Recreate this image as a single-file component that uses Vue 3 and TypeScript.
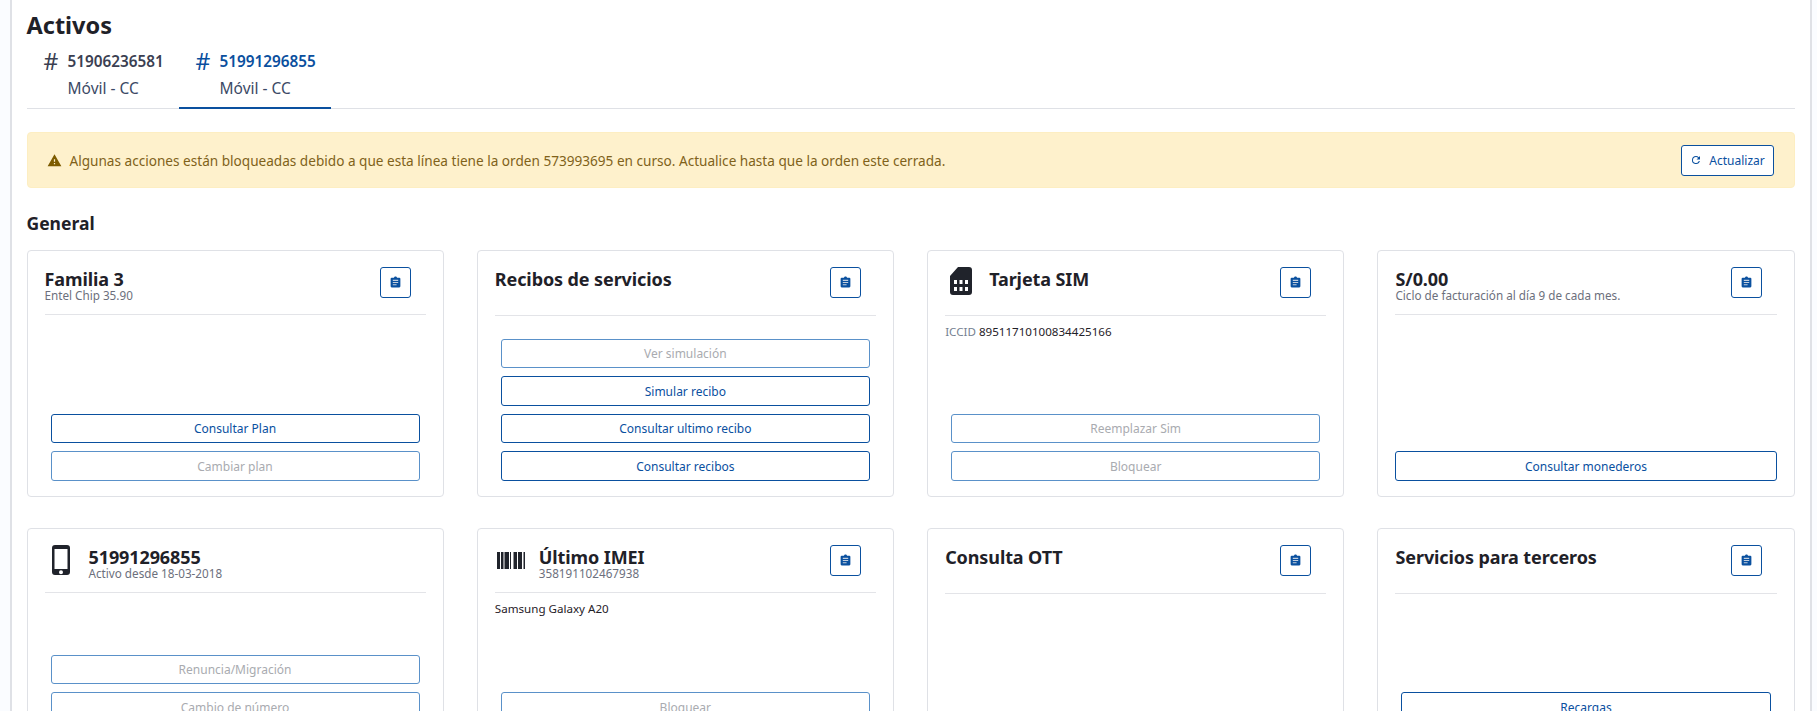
<script setup lang="ts">
type Action = { label: string; enabled?: boolean };
type Card = {
  title: string;
  sub?: string;
  icon?: 'sim' | 'phone' | 'barcode';
  noCopy?: boolean;
  iccid?: string;
  note?: string;
  actions: Action[];
  wide?: boolean;
  inset?: boolean;
  clipped?: boolean;
  low?: boolean;
};

const cards: Card[] = [
  { title: 'Familia 3', sub: 'Entel Chip 35.90', actions: [{ label: 'Consultar Plan', enabled: true }, { label: 'Cambiar plan' }] },
  {
    title: 'Recibos de servicios',
    low: true,
    actions: [
      { label: 'Ver simulación' },
      { label: 'Simular recibo', enabled: true },
      { label: 'Consultar ultimo recibo', enabled: true },
      { label: 'Consultar recibos', enabled: true },
    ],
  },
  { title: 'Tarjeta SIM', icon: 'sim', low: true, iccid: '89511710100834425166', actions: [{ label: 'Reemplazar Sim' }, { label: 'Bloquear' }] },
  { title: 'S/0.00', sub: 'Ciclo de facturación al día 9 de cada mes.', wide: true, actions: [{ label: 'Consultar monederos', enabled: true }] },
  { title: '51991296855', sub: 'Activo desde 18-03-2018', icon: 'phone', noCopy: true, clipped: true, actions: [{ label: 'Renuncia/Migración' }, { label: 'Cambio de número' }] },
  { title: 'Último IMEI', sub: '358191102467938', icon: 'barcode', note: 'Samsung Galaxy A20', clipped: true, actions: [{ label: 'Bloquear' }] },
  { title: 'Consulta OTT', low: true, clipped: true, actions: [] },
  { title: 'Servicios para terceros', low: true, inset: true, clipped: true, actions: [{ label: 'Recargas', enabled: true }] },
];

const tabs = [
  { number: '51906236581', kind: 'Móvil - CC', active: false },
  { number: '51991296855', kind: 'Móvil - CC', active: true },
];
</script>

<template>
  <div class="page">
    <h1 class="title">Activos</h1>
    <nav class="tabs">
      <div v-for="tab in tabs" :key="tab.number" class="tab" :class="{ active: tab.active }">
        <div class="tab-top"><span class="hash">#</span><b>{{ tab.number }}</b></div>
        <div class="tab-kind">{{ tab.kind }}</div>
      </div>
    </nav>

    <div class="alert">
      <svg class="warn" viewBox="0 0 24 24"><path d="M1 21h22L12 2 1 21zm12-3h-2v-2h2v2zm0-4h-2v-4h2v4z" /></svg>
      <span class="alert-text">Algunas acciones están bloqueadas debido a que esta línea tiene la orden 573993695 en curso. Actualice hasta que la orden este cerrada.</span>
      <button class="refresh">
        <svg viewBox="0 0 24 24"><path d="M17.65 6.35A7.95 7.95 0 0 0 12 4a8 8 0 1 0 7.73 10h-2.08A6 6 0 1 1 12 6c1.66 0 3.14.69 4.22 1.78L13 11h7V4l-2.35 2.35z" /></svg>
        Actualizar
      </button>
    </div>

    <h2 class="section">General</h2>

    <div class="grid">
      <section v-for="card in cards" :key="card.title" class="card" :class="{ clipped: card.clipped }">
        <header class="head" :class="{ low: card.low }">
          <div v-if="card.icon" class="glyph">
            <svg v-if="card.icon === 'sim'" class="sim" viewBox="0 0 22 28">
              <path fill-rule="evenodd" d="M8 0h11a3 3 0 0 1 3 3v22a3 3 0 0 1-3 3H3a3 3 0 0 1-3-3V9zM4 13v4h3v-4zm5.500 0v4h3v-4zm5.500 0v4h3v-4zM4 20v4h3v-4zm5.500 0v4h3v-4zm5.500 0v4h3v-4z" />
            </svg>
            <svg v-else-if="card.icon === 'phone'" class="phone" viewBox="0 0 18 30">
              <path fill-rule="evenodd" d="M3 0h12a3 3 0 0 1 3 3v24a3 3 0 0 1-3 3H3a3 3 0 0 1-3-3V3a3 3 0 0 1 3-3zM2.500 4v20h13V4zM9 25.200a2 2 0 1 0 0 4 2 2 0 0 0 0-4z" />
            </svg>
            <svg v-else class="barcode" viewBox="0 0 28 17">
              <path d="M0 0h3v17H0zM4 0h2.500v17H4zM7.500 0H12v17H7.500zM13 0h1v17h-1zM16.500 0H20v17h-3.500zM21 0h4v17h-4zM26.500 0H28v17h-1.500z" />
            </svg>
          </div>
          <div class="heading">
            <div class="card-title">{{ card.title }}</div>
            <div v-if="card.sub" class="card-sub">{{ card.sub }}</div>
          </div>
          <button v-if="!card.noCopy" class="copy" aria-label="Copiar">
            <svg viewBox="0 0 24 24">
              <path d="M19 3h-4.180C14.400 1.840 13.300 1 12 1s-2.400.84-2.820 2H5a2 2 0 0 0-2 2v14a2 2 0 0 0 2 2h14a2 2 0 0 0 2-2V5a2 2 0 0 0-2-2z" />
              <path class="copy-lines" d="M7 7h10v2H7zM7 11h10v2H7zM7 15h7v2H7z" />
            </svg>
          </button>
        </header>
        <div class="rule"></div>
        <p v-if="card.iccid" class="info"><span class="muted">ICCID</span> {{ card.iccid }}</p>
        <p v-if="card.note" class="info">{{ card.note }}</p>
        <div class="actions" :class="{ wide: card.wide, inset: card.inset }">
          <button v-for="action in card.actions" :key="action.label" class="action" :class="{ off: !action.enabled }">{{ action.label }}</button>
        </div>
      </section>
    </div>
  </div>
</template>

<style>
html, body { margin: 0; height: 100%; overflow: hidden; background: #fafcff; }
</style>

<style scoped>
.page {
  box-sizing: border-box;
  width: 1802px;
  height: 711px;
  margin-left: 10px;
  padding: 0 15px 0 14.500px;
  background: #fff;
  border-left: 2px solid #dfe1e6;
  border-right: 2px solid #dfe1e6;
  overflow: hidden;
  font-family: "Noto Sans", sans-serif;
  color: #1f2128;
}
.title { margin: 9px 0 0; font-size: 23.500px; line-height: 32px; font-weight: 700; }
.tabs { display: flex; height: 68px; border-bottom: 1px solid #dfe1e6; box-sizing: border-box; }
.tab { box-sizing: border-box; width: 152px; padding: 8px 0 0 17px; color: #3b3f52; }
.tab.active { color: #0a4f9e; border-bottom: 2px solid #0a509f; height: 68px; }
.tab-top { display: flex; align-items: center; height: 24px; font-size: 15.300px; }
.tab-top b { font-weight: 600; }
.hash { width: 24px; font-size: 23px; line-height: 24px; font-weight: 400; }
.tab-kind { padding-left: 24px; font-size: 15.500px; line-height: 30px; color: #3c4a66; }
.alert {
  display: flex; align-items: center; box-sizing: border-box; height: 56px; margin-top: 23px;
  padding: 0 20px 0 19px; background: #fef1cc; border: 1px solid #fdeec2; border-radius: 4px; color: #80621a;
}
.warn { width: 15px; height: 15px; fill: #7d5c00; margin-right: 8px; flex: none; }
.alert-text { flex: 1; font-size: 13.600px; }
.refresh {
  display: flex; align-items: center; justify-content: center; gap: 7px; box-sizing: border-box;
  width: 93px; height: 31px; background: #fff; border: 1px solid #0a509f; border-radius: 3px;
  color: #0a509f; font: 12px "Noto Sans", sans-serif; padding: 0;
}
.refresh svg { width: 12px; height: 12px; fill: #0a509f; }
.section { margin: 23px 0 0; font-size: 17.500px; line-height: 24px; font-weight: 700; }
.grid { display: grid; grid-template-columns: repeat(4, 1fr); column-gap: 33.300px; row-gap: 31px; grid-auto-rows: 247px; margin-top: 15px; width: 1768px; }
.card { display: flex; flex-direction: column; box-sizing: border-box; padding: 16px 17px 15px; border: 1px solid #dfe1e6; border-radius: 4px; background: #fff; }
.card.clipped { padding-bottom: 52px; }
.head { display: flex; align-items: flex-start; height: 47px; flex: none; }
.head.low { height: 48px; }
.glyph { width: 44px; flex: none; display: flex; align-items: center; }
.sim { width: 22px; height: 28px; fill: #20232b; margin-left: 5px; }
.phone { width: 18px; height: 30px; fill: #20232b; margin-left: 7px; }
.barcode { width: 28px; height: 17px; fill: #20232b; margin: 7px 0 0 2px; }
.heading { flex: 1; min-width: 0; }
.card-title { font-size: 18px; line-height: 20px; font-weight: 700; letter-spacing: -.1px; margin-top: 2px; }
.card-sub { font-size: 11.700px; line-height: 12px; color: #6c6f7c; }
.copy { display: flex; align-items: center; justify-content: center; width: 31px; height: 31px; margin-right: 15px; padding: 0; background: #fff; border: 1px solid #0a509f; border-radius: 3px; }
.copy svg { width: 13px; height: 13px; fill: #0a509f; }
.copy .copy-lines { fill: #c3cfde; }
.rule { height: 1px; flex: none; background: #e3e4e8; }
.info { margin: 8px 0 0; font-size: 11.600px; line-height: 16px; color: #1f2128; }
.muted { color: #74808f; }
.actions { display: flex; flex-direction: column; gap: 8px; margin-top: auto; padding: 0 6px; }
.actions.wide { padding: 0; }
.actions.inset { padding: 0 6px; }
.action { box-sizing: border-box; height: 29.600px; padding: 0; background: #fff; border: 1px solid #0a509f; border-radius: 3px; color: #0a509f; font: 12px "Noto Sans", sans-serif; flex: none; }
.action.off { border-color: #5a91c9; color: #a9abb0; }
</style>
